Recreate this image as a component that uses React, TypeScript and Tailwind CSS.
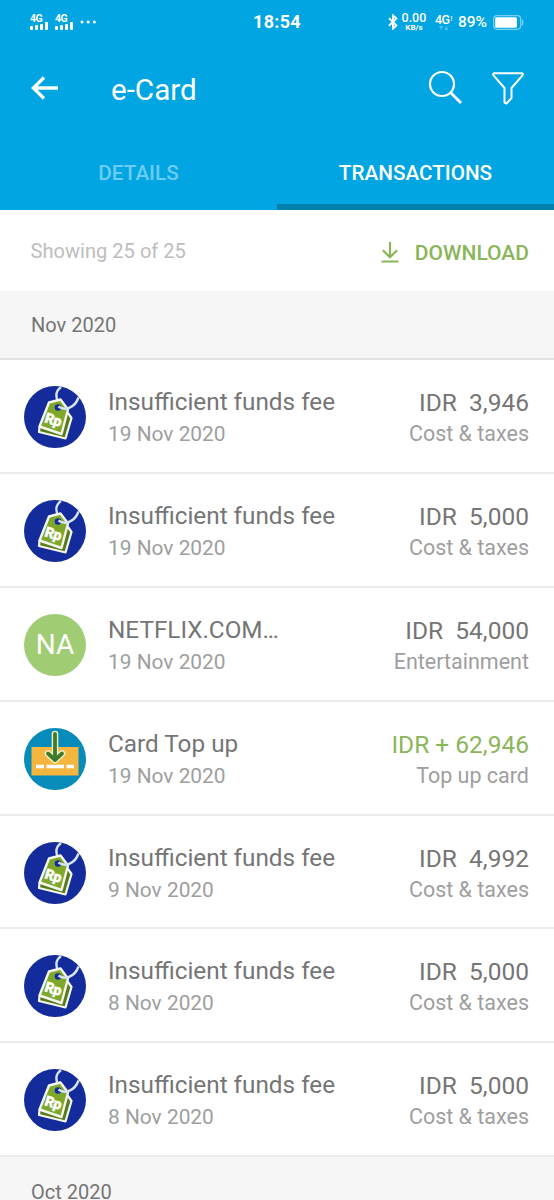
import type { ReactNode } from 'react';

type Transaction = {
  icon: 'fee' | 'initials' | 'topup';
  title: string;
  date: string;
  amount: string;
  category: string;
  credit?: boolean;
};

const transactions: Transaction[] = [
  { icon: 'fee', title: 'Insufficient funds fee', date: '19 Nov 2020', amount: 'IDR\u00A0 3,946', category: 'Cost & taxes' },
  { icon: 'fee', title: 'Insufficient funds fee', date: '19 Nov 2020', amount: 'IDR\u00A0 5,000', category: 'Cost & taxes' },
  { icon: 'initials', title: 'NETFLIX.COM…', date: '19 Nov 2020', amount: 'IDR\u00A0 54,000', category: 'Entertainment' },
  { icon: 'topup', title: 'Card Top up', date: '19 Nov 2020', amount: 'IDR + 62,946', category: 'Top up card', credit: true },
  { icon: 'fee', title: 'Insufficient funds fee', date: '9 Nov 2020', amount: 'IDR\u00A0 4,992', category: 'Cost & taxes' },
  { icon: 'fee', title: 'Insufficient funds fee', date: '8 Nov 2020', amount: 'IDR\u00A0 5,000', category: 'Cost & taxes' },
  { icon: 'fee', title: 'Insufficient funds fee', date: '8 Nov 2020', amount: 'IDR\u00A0 5,000', category: 'Cost & taxes' },
];

const FeeIcon = () => (
  <svg width="62" height="62" viewBox="0 0 62 62" className="block">
    <circle cx="31" cy="31" r="31" fill="#142b9c" />
    <path d="M37 1 C31.5 5 31 11 35 17" fill="none" stroke="#d5e3f3" strokeWidth="2.4" />
    <path d="M15.5 41 L15 46 L41.5 52.5 L47.5 32 L44 27 Z" fill="#587c1c" stroke="#f4f6ee" strokeWidth="2.2" strokeLinejoin="round" />
    <path d="M25 16.5 L36.5 13.5 L44 23.5 L37.5 48 L15.5 40.5 Z" fill="#7da82c" stroke="#f4f6ee" strokeWidth="2.4" strokeLinejoin="round" />
    <circle cx="34" cy="21.5" r="3.3" fill="#142b9c" />
    <path d="M34.5 20.5 C41 25.5 51 21.5 54.5 11.5" fill="none" stroke="#d5e3f3" strokeWidth="2.4" />
    <text x="20" y="36" fontSize="14" fontWeight="700" fill="#fff" stroke="#fff" strokeWidth="0.7" transform="rotate(17 20 36)" className="font-[Roboto,sans-serif]">
      Rp
    </text>
  </svg>
);

const TopUpIcon = () => (
  <svg width="62" height="62" viewBox="0 0 62 62" className="block">
    <circle cx="31" cy="31" r="31" fill="#078bbb" />
    <rect x="7.5" y="19" width="47" height="28.5" fill="#f4b63f" />
    <path d="M12 38.5 H20 M22.5 38.5 H40 M42.5 38.5 H50" stroke="#fff" strokeWidth="3.4" />
    <path d="M31 6 V31 M24 25.5 L31 32 L38 25.5" fill="none" stroke="#eef3c4" strokeWidth="6.6" strokeLinecap="round" strokeLinejoin="round" />
    <path d="M31 6 V31 M24 25.5 L31 32 L38 25.5" fill="none" stroke="#427a2b" strokeWidth="3.8" strokeLinecap="round" strokeLinejoin="round" />
  </svg>
);

const icons: Record<Transaction['icon'], ReactNode> = {
  fee: <FeeIcon />,
  initials: (
    <div className="flex h-[62px] w-[62px] items-center justify-center rounded-full bg-[#a0cd73] text-[28px] text-white">NA</div>
  ),
  topup: <TopUpIcon />,
};

const Signal = () => (
  <div className="w-[19px]">
    <div className="h-[8px] text-[10.5px] font-bold leading-[9px] tracking-[-0.4px]">4G</div>
    <div className="flex h-[8px] items-end gap-[1.6px]">
      <span className="h-[4px] w-[3.3px] rounded-[1px] bg-white" />
      <span className="h-[5px] w-[3.3px] rounded-[1px] bg-white" />
      <span className="h-[6.5px] w-[3.3px] rounded-[1px] bg-white" />
      <span className="h-[8px] w-[3.3px] rounded-[1px] bg-white" />
    </div>
  </div>
);

const StatusBar = () => (
  <div className="flex h-[44px] items-center pl-[30px] pr-[30px]">
    <div className="flex w-[223px] items-center">
      <Signal />
      <div className="ml-[6px]">
        <Signal />
      </div>
      <svg width="17" height="4" viewBox="0 0 17 4" className="ml-[6px]" fill="#fff">
        <circle cx="2" cy="2" r="1.5" />
        <circle cx="8.2" cy="2" r="1.5" />
        <circle cx="14.4" cy="2" r="1.5" />
      </svg>
    </div>
    <div className="text-[18px] font-bold leading-[24px] tracking-[0.3px]">18:54</div>
    <div className="ml-auto flex items-center">
      <svg width="10" height="16" viewBox="0 0 10 16" className="mr-[3px]" fill="none" stroke="#fff" strokeWidth="1.9">
        <path d="M1 4.2 L8.4 11.4 L5 14.6 V1.4 L8.4 4.6 L1 11.8" />
      </svg>
      <div className="w-[26px] text-center">
        <div className="text-[12.5px] font-medium leading-[11px]">0.00</div>
        <div className="text-[8px] font-bold leading-[10px]">KB/s</div>
      </div>
      <div className="ml-[8px] w-[19px]">
        <div className="flex items-center text-[12.5px] font-medium leading-[13px] tracking-[-0.5px]">
          4G<span className="ml-[1px] text-[7px]">!</span>
        </div>
        <svg width="10" height="5" viewBox="0 0 10 5" className="ml-[4px]" fill="#4fbdf0">
          <path d="M0 0 H4.4 L2.2 4 Z M5.2 4 H9.6 L7.4 0 Z" />
        </svg>
      </div>
      <div className="ml-[4px] text-[15.5px] font-medium leading-[20px]">89%</div>
      <svg width="31" height="15" viewBox="0 0 31 15" className="ml-[6px]">
        <rect x="0.7" y="0.7" width="27" height="13.6" rx="3.5" fill="none" stroke="#7bd2f5" strokeWidth="1.2" />
        <rect x="2.2" y="2.2" width="21.8" height="10.6" rx="1.6" fill="#fff" />
        <path d="M28.7 4.6 Q31 7.5 28.7 10.4" fill="none" stroke="#7bd2f5" strokeWidth="1.4" />
      </svg>
    </div>
  </div>
);

const Toolbar = () => (
  <div className="flex h-[90px] items-center pl-[31px] pr-[30px]">
    <svg width="28" height="24" viewBox="0 0 28 24" className="mb-[3px]" fill="none" stroke="#fff" strokeWidth="3.3">
      <path d="M27 12 H2 M13 1.5 L2.3 12 L13 22.5" />
    </svg>
    <h1 className="ml-[52px] mt-[1px] text-[29.6px] leading-[36px]">e-Card</h1>
    <svg width="36" height="36" viewBox="0 0 36 36" className="ml-auto mb-[2px]" fill="none" stroke="#fff" strokeWidth="2.2">
      <circle cx="14" cy="14" r="12" />
      <path d="M22.5 22.5 L33 33" strokeWidth="2.8" />
    </svg>
    <svg width="32" height="33" viewBox="0 0 32 33" className="ml-[28px] mb-[1px]" fill="none" stroke="#fff" strokeWidth="2" strokeLinejoin="round">
      <path d="M2 1.2 H30 Q31.5 1.8 30.5 3.3 L19.5 16 V26 L14.5 31.5 L12.5 30.5 V16 L1.5 3.3 Q0.5 1.8 2 1.2 Z" />
    </svg>
  </div>
);

export default function App() {
  return (
    <div className="h-[1200px] w-[554px] overflow-hidden bg-white font-[Roboto,sans-serif] text-[#757575]">
      <header className="h-[210px] bg-[#00a5e1] text-white">
        <StatusBar />
        <Toolbar />
        <nav className="grid h-[76px] grid-cols-2 text-center text-[20.7px] font-medium leading-[78px]">
          <div className="h-[76px] text-[#6dccf3]">DETAILS</div>
          <div className="h-[76px] border-b-[6px] border-[#0080ad]">TRANSACTIONS</div>
        </nav>
      </header>

      <div className="flex h-[81px] items-center justify-between pl-[30.5px] pr-[25px]">
        <span className="mt-[1px] text-[20.1px] text-[#bdbdbd]">Showing 25 of 25</span>
        <button className="mt-[6px] flex items-center text-[21px] font-medium text-[#8ab558]">
          <svg width="18" height="21" viewBox="0 0 18 21" className="mb-[2px] mr-[16px]" fill="none" stroke="currentColor" strokeWidth="2.2">
            <path d="M9 0 V15 M1.8 8.2 L9 15.2 L16.2 8.2 M0.5 19.5 H17.5" />
          </svg>
          DOWNLOAD
        </button>
      </div>

      <div className="flex h-[69px] items-center border-b-2 border-[#e2e2e2] bg-[#f6f6f6] pl-[31px] pt-px text-[20px]">Nov 2020</div>

      <ul>
        {transactions.map((item, index) => (
          <li key={index} className="flex h-[113.9px] border-b-2 border-[#ececec] pl-[24px] pr-[25px]">
            <div className="mt-[26px] h-[62px] w-[62px]">{icons[item.icon]}</div>
            <div className="ml-[22px] mt-[26px]">
              <div className="text-[24.3px] leading-[32px]">{item.title}</div>
              <div className="text-[20.9px] leading-[32px] text-[#9e9e9e]">{item.date}</div>
            </div>
            <div className="ml-auto mt-[27px] text-right">
              <div className={item.credit ? 'text-[24.5px] leading-[32px] text-[#8ab558]' : 'text-[24.5px] leading-[32px]'}>{item.amount}</div>
              <div className="text-[21.5px] leading-[30px] text-[#9e9e9e]">{item.category}</div>
            </div>
          </li>
        ))}
      </ul>

      <div className="flex h-[69px] items-center bg-[#f6f6f6] pl-[31px] text-[20px]">Oct 2020</div>
    </div>
  );
}
